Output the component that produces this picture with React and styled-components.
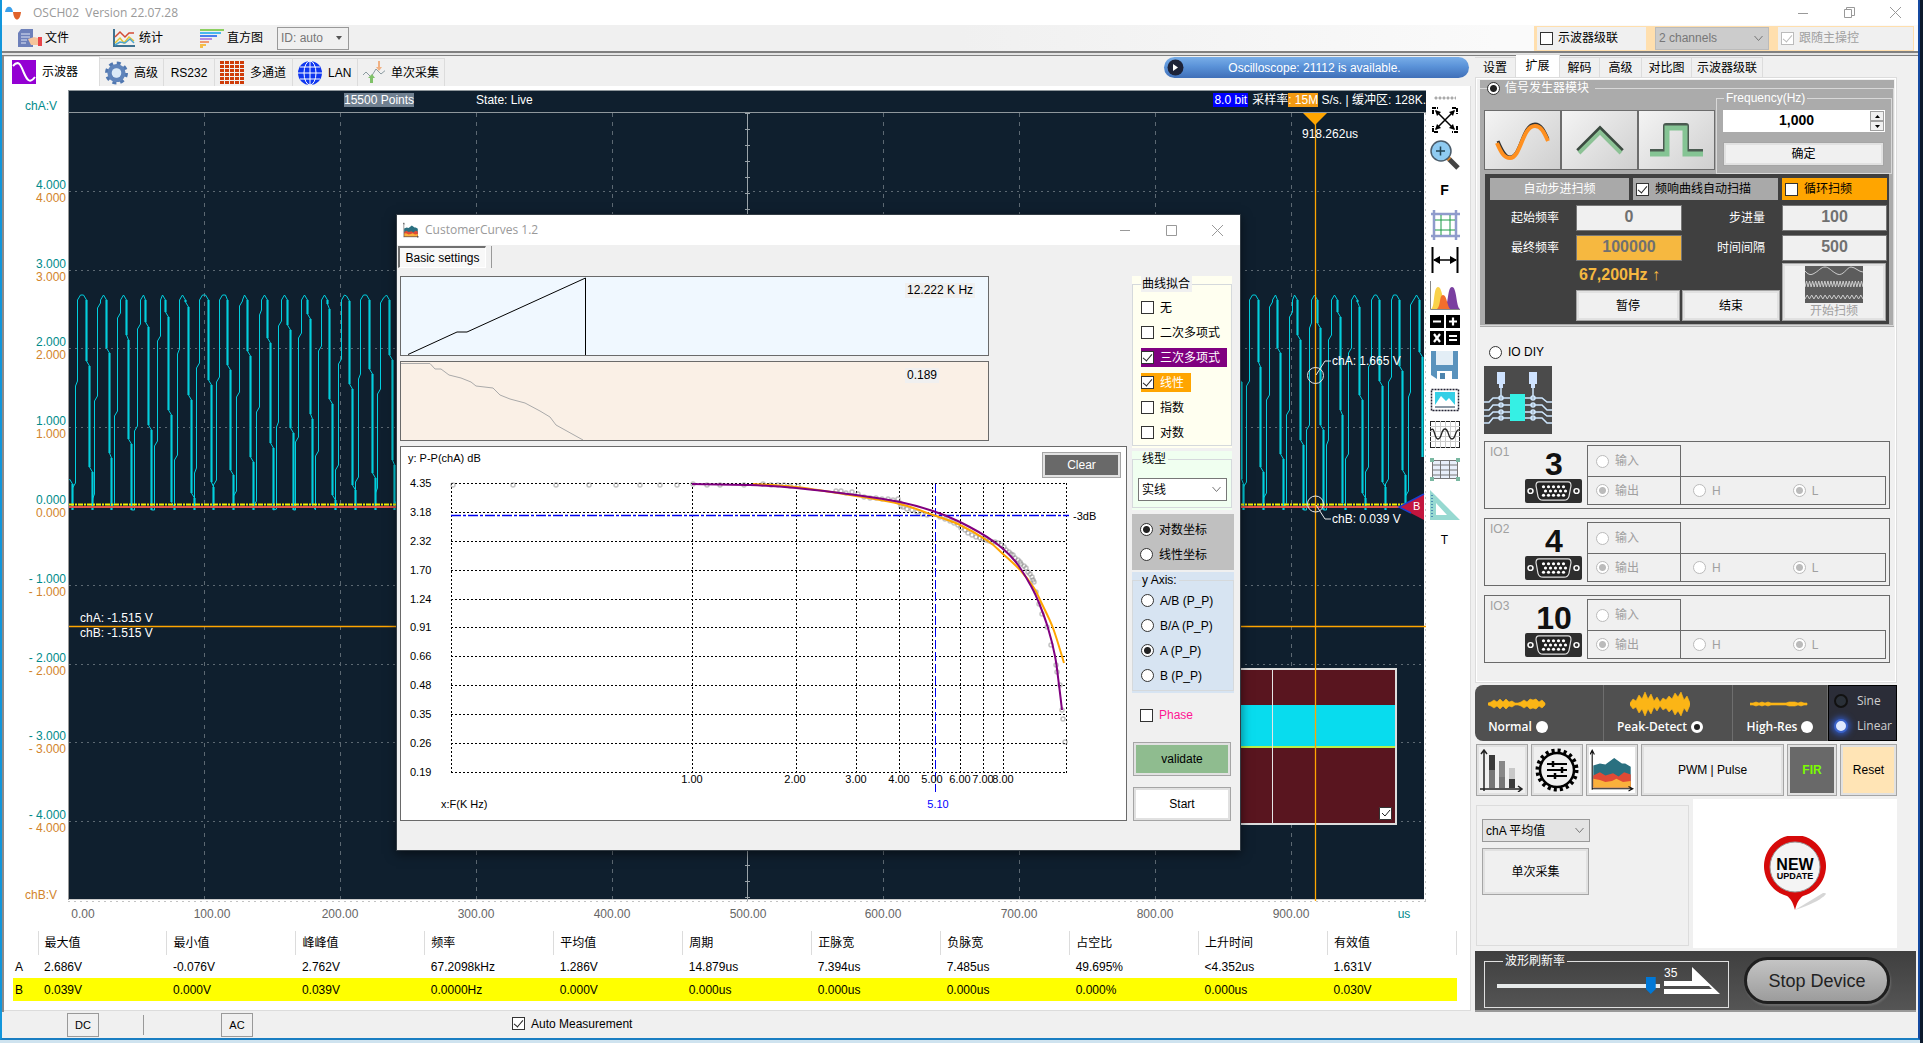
import React from "react";
import styled, { createGlobalStyle, css } from "styled-components";

const GlobalStyle = createGlobalStyle`
  * { box-sizing: border-box; }
  body {
    margin: 0;
    background: #0d1a2c;
    font-family: "Liberation Sans", "Noto Sans CJK SC", sans-serif;
    font-size: 12px;
    line-height: 16px;
    color: #000;
  }
  button, input, select { font: inherit; color: inherit; margin: 0; }
  fieldset { margin: 0; padding: 0; min-width: 0; border: 0; }
  legend { padding: 0; }
  svg { display: block; }
`;

/* ---------- window shell ---------- */

const Desktop = styled.div`
  position: relative;
  padding: 0 3px 3px 0;
  background: linear-gradient(#0d1a2c, #0d1a2c) right / 3px 100% no-repeat, #cfe3ef;
`;

const AppWindow = styled.div`
  display: flex;
  flex-direction: column;
  background: #f0f0f0;
  border-left: 2px solid #1296db;
  border-right: 2px solid #1549a0;
  border-bottom: 2px solid #1a7ec2;
`;

const TitleBar = styled.header`
  display: flex;
  align-items: center;
  height: ${(p) => (p.$tall ? "30px" : "25px")};
  padding-left: ${(p) => (p.$tall ? "6px" : "2px")};
  background: #fff;
`;

const TitleText = styled.div`
  flex: 1;
  padding-left: ${(p) => (p.$wide ? "11px" : "6px")};
  color: #999;
  font-family: "Open Sans", "Noto Sans", sans-serif;
  white-space: pre;
`;

const CaptionButton = styled.button`
  display: grid;
  place-items: center;
  width: 46px;
  height: 100%;
  padding: 0;
  border: 0;
  background: none;
`;

const MenuBar = styled.nav`
  display: flex;
  align-items: center;
  height: 26px;
  padding-left: 14px;
  background: linear-gradient(90deg, #f0f0f0 50%, #fafafa 78%);
`;

const MenuButton = styled.button`
  display: flex;
  align-items: center;
  gap: 3px;
  width: ${(p) => p.$width}px;
  height: 24px;
  padding: 0 2px;
  border: 0;
  background: none;
`;

const Divider = styled.div`
  height: 5px;
  border-top: 2px solid #808080;
  border-bottom: 1px solid #808080;
  background: #e4e4e4;
`;

const SelectBox = styled.div`
  position: relative;
  width: ${(p) => p.$width}px;
  height: 23px;
  svg { position: absolute; right: 6px; top: 8px; pointer-events: none; }
  select {
    appearance: none;
    width: 100%;
    height: 100%;
    padding: 0 3px;
    border: 1px solid ${(p) => p.$border || "#999"};
    border-radius: 0;
    background: ${(p) => p.$bg || "#f0f0f0"};
    color: ${(p) => p.$color || "#000"};
    opacity: 1;
  }
`;

function Select({ label, value, arrow, disabled, ...rest }) {
  return (
    <SelectBox {...rest}>
      <select aria-label={label} disabled={disabled} defaultValue={value}>
        <option>{value}</option>
      </select>
      {arrow === "solid" ? (
        <svg width="7" height="6"><path d="M0 1h6L3 5z" fill="#555" /></svg>
      ) : (
        <svg width="9" height="7"><path d="M.5 1L4.500 5.500 8.500 1" fill="none" stroke="#777" /></svg>
      )}
    </SelectBox>
  );
}

const CascadeBar = styled.div`
  display: flex;
  align-items: center;
  gap: 9px;
  height: 25px;
  margin: 0 4px 0 auto;
  padding: 0 1px 0 3px;
  background: #ffdfae;
`;

const CascadeCell = styled.div`
  display: flex;
  align-items: center;
  width: ${(p) => p.$width}px;
  height: 23px;
  padding-left: 3px;
  background: #f0f0f0;
`;

/* ---------- shared controls ---------- */

const OptionLabel = styled.label`
  display: inline-flex;
  align-items: center;
  gap: ${(p) => p.$gap || 6}px;
  color: ${(p) => p.$color || "inherit"};
  white-space: nowrap;
`;

const Check = styled.input.attrs({ type: "checkbox" })`
  appearance: none;
  flex: none;
  position: relative;
  width: 13px;
  height: 13px;
  border: 1px solid ${(p) => (p.disabled ? "#bbb" : "#333")};
  background: #fff;
  &:checked::after {
    content: "";
    position: absolute;
    left: 3px;
    top: 0;
    width: 4px;
    height: 8px;
    border: solid ${(p) => (p.disabled ? "#bbb" : "#222")};
    border-width: 0 1px 1px 0;
    transform: rotate(40deg);
  }
`;

const Radio = styled.input.attrs({ type: "radio" })`
  appearance: none;
  flex: none;
  width: 13px;
  height: 13px;
  border: 1px solid ${(p) => (p.disabled ? "#bbb" : "#333")};
  border-radius: 50%;
  background: #fff;
  &:checked {
    background: radial-gradient(circle, ${(p) => (p.disabled ? "#bbb" : "#222")} 3px, #fff 4px);
  }
`;

const FlatButton = styled.button`
  display: flex;
  flex-direction: column;
  align-items: center;
  justify-content: center;
  flex: ${(p) => (p.$grow ? "1" : "none")};
  width: ${(p) => (p.$width ? p.$width + "px" : "auto")};
  height: ${(p) => p.$height}px;
  padding: 0;
  border: 1px solid #a5a5a5;
  box-shadow: inset 0 0 0 2px #e1e1e1;
  background: ${(p) => p.$bg || "#f0f0f0"};
  color: ${(p) => p.$color || "#000"};
  font-weight: ${(p) => (p.$bold ? "bold" : "normal")};
  overflow: hidden;
`;

/* ---------- main split ---------- */

const Main = styled.main`
  display: grid;
  grid-template-columns: minmax(0, 1fr) 443px;
`;

const LeftPane = styled.section`
  margin-right: 4px;
  border-left: 2px solid #8a8a8a;
`;

const TabStrip = styled.div`
  display: flex;
  align-items: flex-end;
  height: 30px;
`;

const Tab = styled.button`
  display: flex;
  align-items: center;
  justify-content: ${(p) => (p.$text ? "center" : "flex-start")};
  gap: 6px;
  height: ${(p) => (p.$active ? "30px" : "28px")};
  width: ${(p) => p.$width}px;
  padding: 0 ${(p) => (p.$active ? "8px" : "5px")};
  border: 1px solid #dcdcdc;
  border-width: 1px 1px 0 0;
  background: ${(p) => (p.$active ? "#fff" : "#f0f0f0")};
  white-space: nowrap;
`;

const Notice = styled.div`
  display: flex;
  align-items: center;
  align-self: flex-start;
  width: 305px;
  height: 21px;
  margin: 1px 2px 0 auto;
  padding-left: 3px;
  border-radius: 11px;
  background: linear-gradient(#79aee8, #5a92d8 45%, #3f6fb8);
  color: #fff;
  span { flex: 1; padding-right: 24px; text-align: center; }
`;

const ScopePage = styled.div`
  height: 925px;
  padding-top: 4px;
  background: #fff;
  border-bottom: 1px solid #dcdcdc;
  border-right: 1px solid #dcdcdc;
`;

const ScopeRow = styled.div`
  display: grid;
  grid-template-columns: minmax(0, 1fr) 44px;
`;

const ScopeHead = styled.div`
  display: flex;
  height: 23px;
`;

const AxisName = styled.div`
  width: 64px;
  padding: 8px 0 0 21px;
  color: #008b8b;
`;

const StatusLine = styled.div`
  display: flex;
  flex: 1;
  align-items: flex-start;
  padding: 2px 0 0 275px;
  border: 1px solid #8f979c;
  border-right: 0;
  background: #0f1f2e;
  color: #fff;
  line-height: 14px;
  white-space: pre;
`;

const StatusRight = styled.div`
  margin-left: auto;
`;

const Chip = styled.span`
  padding: 0 ${(p) => p.$pad || 0}px;
  margin-right: ${(p) => p.$after || 0}px;
  background: ${(p) => p.$bg || "none"};
`;

const Plot = styled.svg`
  width: 100%;
  height: 812px;
  font-size: 12px;
`;

const ToolColumn = styled.div`
  display: flex;
  flex-direction: column;
  align-items: center;
  padding-right: 7px;
`;

const Grip = styled.div`
  width: 22px;
  height: 12px;
  background: radial-gradient(circle, #aaa 1px, transparent 2px) 0 6px / 4px 4px repeat-x;
`;

const ToolButton = styled.button`
  display: grid;
  place-items: center;
  width: 34px;
  height: 35px;
  padding: 0;
  border: 0;
  background: none;
  font-size: ${(p) => (p.$bold ? "14px" : "12px")};
  font-weight: ${(p) => (p.$bold ? "bold" : "normal")};
`;

const Measurements = styled.table`
  width: calc(100% - 22px);
  margin: 6px 0 0 9px;
  border-collapse: collapse;
  table-layout: fixed;
  th, td { height: 23px; padding: 0 0 0 6px; text-align: left; font-weight: normal; }
  thead th { height: 24px; border-right: 1px solid #dcdcdc; }
  tbody th, thead td { width: 25px; padding-left: 2px; }
  thead td { border-right: 1px solid #dcdcdc; }
  tbody tr:last-child { background: #ff0; }
`;

const Footer = styled.footer`
  display: flex;
  align-items: center;
  height: 26px;
  padding-left: 65px;
`;

const CouplingButton = styled.button`
  width: 32px;
  height: 24px;
  padding: 0;
  border: 1px solid #999;
  background: #f0f0f0;
  font-size: 11px;
`;

const FooterRule = styled.div`
  width: 1px;
  height: 20px;
  margin: 0 77px 0 44px;
  background: #999;
`;

const AutoMeasure = styled.div`
  margin-left: 259px;
`;

/* ---------- right pane ---------- */

const RightPane = styled.aside`
  display: flex;
  flex-direction: column;
`;

const SideTabs = styled.div`
  display: flex;
  align-items: flex-end;
  height: 21px;
`;

const SideTab = styled.button`
  width: ${(p) => p.$width}px;
  height: ${(p) => (p.$active ? "23px" : "20px")};
  padding: 0;
  border: 1px solid #dcdcdc;
  border-width: 1px 1px 0 0;
  background: ${(p) => (p.$active ? "#fff" : "#f0f0f0")};
  white-space: nowrap;
`;

const SidePage = styled.div`
  height: 606px;
  margin-right: 21px;
  padding: 1px 1px 0 3px;
  border: 2px solid #fff;
  outline: 1px solid #dcdcdc;
  outline-offset: -1px;
  background: #f0f0f0;
`;

const Generator = styled.div`
  height: 247px;
  background: #ababab;
`;

const GeneratorSet = styled.fieldset`
  height: 246px;
  border: 1px solid #d8d8d8;
  border-left: 0;
  legend {
    height: 16px;
    margin-left: 7px;
    padding-right: 6px;
    color: #fff;
  }
`;

const WaveRow = styled.div`
  display: flex;
  padding-left: 4px;
`;

const WaveButton = styled.button`
  display: grid;
  place-items: center;
  width: 77px;
  height: 60px;
  margin-top: 14px;
  padding: 0;
  border: 1px solid #6c6c6c;
  background: linear-gradient(135deg, #f4f4f4, #cfcfcf);
`;

const FrequencySet = styled.fieldset`
  width: 176px;
  height: 83px;
  margin: -5px 0 0 1px;
  padding: 5px 6px 0;
  border: 1px solid #d8d8d8;
  legend { height: 14px; margin-left: 1px; padding: 0 2px; color: #fff; line-height: 14px; }
`;

const SpinBox = styled.div`
  display: flex;
  height: 22px;
  margin-bottom: 10px;
  background: #fff;
  input {
    flex: 1;
    width: 0;
    padding: 0 0 3px;
    border: 0;
    background: none;
    font-size: 14px;
    font-weight: bold;
    text-align: center;
  }
`;

const SpinButtons = styled.div`
  display: grid;
  width: 15px;
  padding: 1px 1px 1px 0;
  button {
    display: grid;
    place-items: center;
    padding: 0;
    border: 1px solid #a0a0a0;
    background: #f0f0f0;
  }
`;

const SweepPanel = styled.div`
  display: flex;
  flex-direction: column;
  gap: 4px;
  height: 150px;
  margin: 0 4px 0 5px;
  padding: 4px 2px 0 5px;
  background: #404040;
  color: #fff;
`;

const SweepHead = styled.div`
  display: grid;
  grid-template-columns: 139px 145px 1fr;
  gap: 4px;
  height: 23px;
`;

const SweepCell = styled.div`
  display: flex;
  align-items: center;
  height: 22px;
  padding-left: 3px;
  background: ${(p) => p.$bg};
  color: #000;
`;

const SweepTitle = styled.button`
  height: 22px;
  padding: 0;
  border: 0;
  background: #a9a9a9;
  color: #fff;
`;

const SweepFields = styled.div`
  display: grid;
  grid-template-columns: 86px 106px 100px 1fr;
  gap: 4px 0;
  align-items: center;
  label { padding-right: 17px; text-align: right; }
`;

const SweepInput = styled.input`
  width: 100%;
  height: 26px;
  padding: 0 0 2px;
  border: 1px solid #777;
  border-radius: 0;
  background: ${(p) => p.$bg || "#f0f0f0"};
  color: #707070;
  font-size: 16px;
  font-weight: bold;
  text-align: center;
`;

const SweepActions = styled.div`
  display: flex;
  justify-content: flex-end;
  gap: 2px;
  margin-top: -2px;
  padding-right: 1px;
`;

const SweepRun = styled.div`
  display: flex;
  flex-wrap: wrap;
  gap: 0 2px;
  width: 204px;
`;

const SweepReading = styled.output`
  width: 100%;
  height: 27px;
  padding: 4px 0 0 3px;
  color: #f6b840;
  font-size: 16px;
  font-weight: bold;
`;

const DiyRow = styled.div`
  padding: 17px 0 6px 9px;
  height: 39px;
`;

const ChipPicture = styled.div`
  width: 68px;
  height: 68px;
  margin: 0 0 7px 4px;
`;

const IoCard = styled.section`
  display: grid;
  grid-template-columns: 102px 1fr;
  height: 68px;
  margin: 0 4px 9px 4px;
  border: 1px solid #6a6a6a;
  color: #a0a0a0;
`;

const IoId = styled.div`
  display: grid;
  grid-template-columns: 35px 1fr;
  grid-template-rows: 34px 25px;
  padding: 2px 4px 0 5px;
  strong {
    color: #111;
    font-size: 32px;
    line-height: 40px;
    text-align: center;
  }
  svg { grid-column: 2; margin-top: 1px; }
`;

const IoGrid = styled.div`
  display: grid;
  grid-template-columns: 94px 1fr;
  grid-template-rows: 31px 29px;
  padding: 3px 3px 0 0;
`;

const IoCell = styled.div`
  display: flex;
  align-items: center;
  gap: ${(p) => p.$gap || 0}px;
  padding-left: ${(p) => p.$left || 8}px;
  border: 1px solid #6a6a6a;
  border-left-width: ${(p) => (p.$joined ? 0 : 1)}px;
  border-bottom-width: ${(p) => (p.$open ? 0 : 1)}px;
`;

const ModeStrip = styled.div`
  display: grid;
  grid-template-columns: 129px 129px 95px 1fr;
  height: 56px;
  margin: 2px 21px 3px 0;
  border-radius: 8px 0 0 8px;
  background: #505050;
  color: #fff;
  font-family: "Open Sans", "Noto Sans", sans-serif;
  overflow: hidden;
`;

const Mode = styled.label`
  display: flex;
  flex-direction: column;
  align-items: center;
  gap: 1px;
  padding-top: 5px;
  padding-right: ${(p) => p.$shift || 0}px;
  border-right: 1px solid #6e6e6e;
  font-weight: 600;
  span { display: flex; align-items: center; gap: 4px; white-space: nowrap; }
`;

const ModeRadio = styled.input.attrs({ type: "radio" })`
  appearance: none;
  width: 12px;
  height: 12px;
  border-radius: 50%;
  background: #fff;
  &:checked { border: 3px solid #fff; background: #222; }
`;

const Interp = styled.div`
  display: grid;
  grid-template-rows: 25px 25px;
  padding: 2px 0 0 5px;
  border: 1px solid #000;
  background: #2b2d38;
  color: #cfcfcf;
  overflow: hidden;
`;

const LedRadio = styled.input.attrs({ type: "radio" })`
  appearance: none;
  flex: none;
  width: 14px;
  height: 14px;
  border: 2px solid #111;
  border-radius: 50%;
  background: #2a3038;
  &:checked { border-color: #3a62c8; background: #dfe9ff; box-shadow: 0 0 6px 2px #3158c0; }
`;

const ToolRow = styled.div`
  display: flex;
  gap: 3px;
  margin: 0 21px 3px 1px;
`;

const LowerRow = styled.div`
  display: grid;
  grid-template-columns: 213px 1fr;
  gap: 4px;
  height: 149px;
  margin: 0 21px 3px 1px;
`;

const CaptureBox = styled.div`
  display: flex;
  flex-direction: column;
  align-items: flex-start;
  gap: 6px;
  margin: 6px 0 2px;
  padding: 13px 5px 0;
  border: 1px solid #dcdcdc;
`;

const UpdateBox = styled.div`
  display: grid;
  place-items: center;
  background: #fff;
`;

const DeviceBar = styled.div`
  display: flex;
  align-items: center;
  height: 61px;
  margin-right: 2px;
  padding-left: 9px;
  border-bottom: 2px solid #999;
  background: linear-gradient(#3f3f3f, #555);
`;

const RefreshSet = styled.fieldset`
  display: flex;
  width: 245px;
  height: 55px;
  padding-left: 12px;
  border: 1px solid #e0e0e0;
  color: #fff;
  legend { margin-left: 6px; padding: 0 2px; }
`;

const RefreshSlider = styled.input.attrs({ type: "range" })`
  appearance: none;
  width: 163px;
  height: 17px;
  margin: 8px 4px 0 0;
  background: linear-gradient(#e7eaea, #e7eaea) center / 100% 4px no-repeat;
  &::-webkit-slider-thumb {
    appearance: none;
    width: 10px;
    height: 17px;
    background: #0078d7;
    clip-path: polygon(0 0, 100% 0, 100% 70%, 50% 100%, 0 70%);
  }
`;

const RefreshValue = styled.output`
  display: block;
  height: 38px;
  line-height: 8px;
  svg { margin-top: -10px; }
`;

const StopButton = styled.button`
  width: 146px;
  height: 47px;
  margin-left: 15px;
  border: 3px solid #1f1f1f;
  border-radius: 24px;
  background: linear-gradient(#c4c4c4, #9c9c9c);
  box-shadow: 1px 2px 2px #6a6a6a;
  font-size: 18px;
  color: #222;
  white-space: nowrap;
`;

/* ---------- curve window ---------- */

const CurveWindow = styled.section`
  position: absolute;
  left: 396px;
  top: 214px;
  width: 845px;
  height: 637px;
  border: 1px solid #333c44;
  background: #f0f0f0;
  box-shadow: 0 3px 10px rgba(0, 0, 0, 0.5);
`;

const CurveTabs = styled.div`
  display: flex;
  gap: 5px;
  height: 22px;
  margin: 1px 0 8px;
  padding-left: 1px;
  i { width: 1px; background: #999; }
`;

const CurveTab = styled.button`
  width: 88px;
  padding: 0;
  border: 1px solid #fff;
  border-top: 2px solid #707070;
  border-left: 2px solid #707070;
  background: #f8f8f8;
  white-space: nowrap;
`;

const CurveBody = styled.div`
  display: grid;
  grid-template-columns: 727px 102px;
  gap: 5px;
  padding-left: 3px;
`;

const CurveCharts = styled.div`
  display: flex;
  flex-direction: column;
  gap: 5px;
`;

const MiniChart = styled.div`
  position: relative;
  width: 589px;
  height: 80px;
  border: 1px solid #6a6a6a;
  background: ${(p) => p.$bg};
`;

const MiniValue = styled.output`
  position: absolute;
  left: 504px;
  top: 6px;
  padding: 0 2px;
  background: #f0f0f0;
  line-height: 15px;
`;

const BigChart = styled.div`
  position: relative;
  height: 375px;
  border: 1px solid #6a6a6a;
  background: #fff;
  svg { font-size: 11px; }
  button { position: absolute; right: 5px; top: 5px; }
`;

const CurveOptions = styled.div`
  display: flex;
  flex-direction: column;
`;

const OptionPanel = styled.div`
  height: ${(p) => p.$height}px;
  margin-bottom: ${(p) => p.$after}px;
  margin-right: ${(p) => p.$inset || 0}px;
  background: ${(p) => p.$bg};
  ${(p) =>
    p.$plain &&
    css`
      padding-top: 3px;
      fieldset { border: 0; }
    `}
`;

const OptionSet = styled.fieldset`
  height: calc(100% - 2px);
  padding: ${(p) => p.$top || 0}px 0 0 8px;
  border: 1px solid #d5d9dc;
  legend { padding: 0 2px 0 1px; background: ${(p) => p.$legend || "none"}; }
`;

const OptionRow = styled.div`
  display: flex;
  align-items: center;
  height: 25px;
  label { height: 19px; padding-right: ${(p) => (p.$bg ? 7 : 0)}px; background: ${(p) => p.$bg || "none"}; }
`;

const LineSelect = styled.div`
  margin: 11px 0 0 -3px;
`;

const PhaseRow = styled.div`
  height: 40px;
  padding: 5px 0 0 8px;
`;

const ActionStack = styled.div`
  display: flex;
  flex-direction: column;
  gap: 11px;
  margin: 0 3px 0 1px;
`;

/* ---------- icons ---------- */

const LogoIcon = () => (
  <svg width="18" height="16" viewBox="0 0 18 16">
    <path d="M1 7c1-7 7-7 8 0z" fill="#3ba0ea" /><path d="M9 7h8c-1 10-7 10-8 0z" fill="#e0622a" />
  </svg>
);
const AreaIcon = ({ size = 16 }) => (
  <svg width={size} height={size} viewBox="0 0 40 40">
    <path d="M3 36V16l6-2 5 1 8-6 7 5 3 0 5 3v19z" fill="#2a7080" />
    <path d="M3 36V25l6-3 5 3 7-2 5 3 5-4 6 2v12z" fill="#e04a35" />
    <path d="M3 36V28l6 1 5 2 6-1 4-2 6 3 7-1v6z" fill="#f9b13c" />
    <path d="M2 37h36M2 38V3M0 6l2-4 2 4M35 35l4 2-4 2" fill="none" stroke="#111" />
  </svg>
);
const FileIcon = () => (
  <svg width="24" height="19" viewBox="0 0 24 19">
    <path d="M3 0h12v18H0V4z" fill="#6d80ba" /><path d="M3 5h9M3 8h9M3 11h6M3 14h5" stroke="#dfe5f5" />
    <path d="M10 10l6-2 4 1v7h-7z" fill="#f5c49b" /><path d="M20 8h4v9h-4z" fill="#e8454a" />
  </svg>
);
const StatsIcon = () => (
  <svg width="24" height="19" viewBox="0 0 24 19" fill="none" strokeWidth="1.500">
    <path d="M2 0v17h21" stroke="#3f7291" strokeWidth="2" /><path d="M3 8l5-5 5 5 4-4 5 0" stroke="#d34b34" />
    <path d="M3 14l5-5 4 5 5-6 5 4" stroke="#e5c32e" /><path d="M3 16l5-3 5 1 5-4 4 4" stroke="#4ca7cf" />
  </svg>
);
const FunnelIcon = () => (
  <svg width="24" height="19" viewBox="0 0 24 19" strokeWidth="2">
    <path d="M0 1h24" stroke="#8ccf5f" /><path d="M0 4h21" stroke="#4ab8ee" /><path d="M0 7h17" stroke="#4a7fee" />
    <path d="M0 10h12" stroke="#b58be0" /><path d="M0 13h9" stroke="#f09a72" /><path d="M0 16h6M0 18h3" stroke="#f5bd48" />
  </svg>
);
const SineTabIcon = () => (
  <svg width="24" height="24"><path d="M0 0h24v24H0z" fill="#9400d3" /><path d="M1 6c6-7 8 0 11 7s6 11 11 4" fill="none" stroke="#fff" strokeWidth="2" /></svg>
);
const GearIcon = () => (
  <svg width="24" height="24" viewBox="0 0 24 24">
    <circle cx="12" cy="12" r="10" fill="none" stroke="#5077b0" strokeWidth="4" strokeDasharray="4 3.850" />
    <circle cx="12" cy="12" r="7" fill="none" stroke="#5f84bb" strokeWidth="5" /><circle cx="12" cy="12" r="5" fill="#dbeaf8" />
  </svg>
);
const DotsIcon = () => (
  <svg width="24" height="24">
    {[0, 4, 8, 12, 16, 20].map((y) => [0, 5, 10, 15, 20].map((x) => <rect key={x + "-" + y} x={x} y={y} width="4" height="3" fill="#cf3c0a" />))}
  </svg>
);
const GlobeIcon = () => (
  <svg width="24" height="24"><circle cx="12" cy="12" r="12" fill="#0f36f0" />
    <path d="M12 0v24M0 12h24M2 6h20M2 18h20" stroke="#fff" fill="none" /><ellipse cx="12" cy="12" rx="6" ry="12" fill="none" stroke="#fff" /></svg>
);
const CaptureIcon = () => (
  <svg width="24" height="24" fill="none"><path d="M0 14l3-3 5 5 5-8 5 5 6-5" stroke="#8b9aa0" />
    <path d="M15 0v6h-2l3 4 3-4h-2V0z" fill="#f0b183" /><path d="M7 22v-5H5l4-4 3 4h-2v5z" fill="#7fc168" /></svg>
);

const tools = [
  ["Fit", <svg width="28" height="28" viewBox="0 0 28 28" fill="none" stroke="#000" strokeWidth="1.500">
    <path d="M2 8V2h5M21 2h5v6M26 20v6h-5M7 26H2v-6" strokeWidth="2" strokeDasharray="4 1" /><path d="M5 5l18 18M23 5L5 23" />
    <path d="M4 4l6 2-4 4zM24 4l-6 2 4 4zM4 24l6-2-4-4zM24 24l-6-2 4-4z" fill="#000" stroke="none" /></svg>],
  ["Zoom", <svg width="30" height="30" viewBox="0 0 30 30"><path d="M19 19l9 9" stroke="#444" strokeWidth="5" /><path d="M17 20l3-3" stroke="#f08a24" strokeWidth="3" />
    <circle cx="11" cy="11" r="10" fill="#8fcbf2" stroke="#4b5c6b" strokeWidth="1.500" /><path d="M6 11h9M10.500 6.500v9" stroke="#245" strokeWidth="1.500" /></svg>],
  ["F", "F"],
  ["Grid", <svg width="30" height="30" fill="none"><path d="M1 4h29M1 26h29M4 0v30M26 0v30" stroke="#8f9bcc" strokeWidth="2.500" /><path d="M11 5v20M20 5v20M5 10h20M5 20h20" stroke="#1d9c46" /></svg>],
  ["Width", <svg width="28" height="26"><path d="M1.500 0v26M26.500 0v26" stroke="#000" strokeWidth="2" /><path d="M3 13h22" stroke="#000" strokeWidth="1.500" /><path d="M2 13l7-4v8zM26 13l-7-4v8z" /></svg>],
  ["Distribution", <svg width="30" height="30"><path d="M1 29C5 28 3 7 8 7s5 20 8 22z" fill="#fad24a" /><path d="M14 29c5-3 3-22 8-22s4 20 8 22z" fill="#7a3fa0" />
    <path d="M7 29c4-3 2-14 6-14s4 11 7 14z" fill="#f26e2c" /><path d="M.5 1v28.500H30" fill="none" stroke="#888" /></svg>],
  ["Math", <svg width="30" height="30"><path d="M0 0h14v13H0zM16 0h14v13H16zM0 16h14v14H0zM16 16h14v14H16z" />
    <path d="M3 6.500h8M19 6.500h8M23 2.500v8M4 19l6 8M10 19l-6 8M19 21h8M19 25h8" stroke="#fff" strokeWidth="2.200" /></svg>],
  ["Save", <svg width="27" height="28"><path d="M0 0h27v28H6l-6-4z" fill="#5a93bd" /><path d="M5 0h17v14H5z" fill="#e3eef6" /><path d="M6 20h15v8H6z" fill="#fff" /><path d="M9 22h5v6H9z" fill="#4d84ad" /></svg>],
  ["Picture", <svg width="30" height="24"><rect x="1.500" y="1.500" width="27" height="21" fill="none" stroke="#223" strokeWidth="1.500" strokeDasharray="2 1" />
    <path d="M5 4h20v13H5z" fill="#35cfe6" /><path d="M5 17l6-9 5 5 3-3 6 7z" fill="#fff" /><path d="M5 18h20v2H5z" fill="#8a98a5" /></svg>],
  ["Wave", <svg width="30" height="27"><rect x=".5" y=".5" width="29" height="26" fill="#fff" stroke="#222" />
    <path d="M5.500 0v27M10.500 0v27M15.500 0v27M20.500 0v27M25.500 0v27M0 5.500h30M0 10.500h30M0 15.500h30M0 20.500h30" stroke="#ccc" />
    <path d="M1 9c4-4 3 9 7 9s3-10 7-10 3 10 7 10 3-10 7-9" fill="none" stroke="#222" strokeWidth="1.300" /></svg>],
  ["Table", <svg width="30" height="23"><rect x="2.500" y="2.500" width="25" height="18" fill="#e8effa" stroke="#777" />
    <path d="M10.500 2v19M19.500 2v19M2 7h26M2 12h26M2 17h26" stroke="#777" fill="none" /><path d="M0 0h4v4H0zM26 0h4v4h-4zM0 19h4v4H0zM26 19h4v4h-4z" fill="#7ab8a2" /></svg>],
  ["Ruler", <svg width="30" height="30"><path d="M0 0l30 30H0zM6 13v12h11z" fill="#97d9d1" fillRule="evenodd" /><path d="M2 5v22" stroke="#4c8fb5" strokeWidth="2" strokeDasharray="1 2" /></svg>],
  ["Text", "T"],
];

const Connector = () => (
  <svg width="57" height="24" viewBox="0 0 57 25" preserveAspectRatio="none">
    <rect width="57" height="25" rx="2" fill="#2e2e2e" /><path d="M14 3h29q3 0 3 4l-2 11q-1 4-5 4H18q-4 0-5-4L11 7q0-4 3-4z" fill="#222" stroke="#ddd" strokeWidth="1.200" />
    <circle cx="5.500" cy="12.500" r="2.500" fill="none" stroke="#fff" strokeWidth="1.500" /><circle cx="51.500" cy="12.500" r="2.500" fill="none" stroke="#fff" strokeWidth="1.500" />
    {[0, 1, 2, 3, 4].map((i) => <g key={i} fill="#fff"><circle cx={18.5 + i * 5} cy="8" r="1.600" /><circle cx={20.5 + i * 5} cy="12.500" r="1.600" /><circle cx={18.5 + i * 5} cy="17" r="1.600" /></g>)}
  </svg>
);

const ChipDrawing = () => (
  <svg width="68" height="68">
    <path d="M0 0h68v68H0z" fill="#4b4b4b" />
    <g fill="none" stroke="#cfe8ff" strokeWidth="1.500">
      {[32, 39, 46, 52].map((y, i) => <g key={y}><path d={`M27 ${y}H9l-4 ${4 + (i % 2)}H0M41 ${y}h17l5 ${4 + (i % 2)}h5`} /><circle cx="17" cy={y} r="2" /><circle cx="49" cy={y} r="2" /></g>)}
      <path d="M17 22v8M49 22v8" />
    </g>
    <path d="M13 6h8v12h-2v4h-4v-4h-2zM45 6h8v12h-2v4h-4v-4h-2z" fill="#cfe3ff" /><path d="M26 28h15v27H26z" fill="#35f0e4" />
  </svg>
);

const burst = (heights) => "M0 18" + heights.map((h, i) => `L${i * 3} ${18 - h}`).join("") + heights.map((h, i) => { const j = heights.length - 1 - i; return `L${j * 3} ${18 + heights[j]}`; }).join("") + "Z";
const modeWaves = [
  [1, 2, 4, 2, 5, 2, 5, 2, 3, 1, 1, 2, 4, 2, 5, 4, 5, 2, 4, 1],
  [1, 5, 3, 9, 5, 12, 5, 10, 3, 7, 2, 6, 4, 8, 5, 11, 7, 12, 4, 8, 1],
  [1, 1, 2, 1, 2, 1, 2, 1, 1, 1, 1, 1, 1, 2, 2, 2, 1, 2, 1, 1],
];
const ModeWave = ({ index }) => (
  <svg width="60" height="28" viewBox="0 4 60 28"><path d={burst(modeWaves[index])} fill="#fbb516" stroke="#fbb516" strokeWidth=".6" /></svg>
);

/* ---------- oscilloscope drawing ---------- */

const ZERO = 507;
const DIV_Y = 78.8;
const DIV_X = 135.8;

function sampledWave() {
  const step = 2.83;
  const yAt = (x) => Math.round(Math.max(295, Math.min(510, 402 - 124 * Math.cos(((x - 82) / 20.2) * Math.PI * 2))));
  let line = "";
  let fall = "";
  for (let x = 69; x < 1421; x += step) {
    const px = Math.round(x) + 0.5;
    const nx = Math.round(x + step) + 0.5;
    const y = yAt(x);
    const next = yAt(x + step);
    const dy = next - y;
    const bend = Math.sign(dy) * Math.min(5, Math.abs(dy));
    if (!line) line = `M${px} ${y}`;
    if (dy > 0) {
      line += `L${nx} ${y + bend}V${next}`;
      fall += `M${nx} ${y + bend}V${next}`;
    } else {
      line += `V${next - bend}L${nx} ${next}`;
    }
  }
  return [line, fall];
}
const [WAVE_LINE, WAVE_FALL] = sampledWave();

function ScopePlot() {
  const rows = [4, 3, 2, 1, 0, -1, -2, -3, -4];
  const fmt = (v) => (v < 0 ? "- " : "") + Math.abs(v).toFixed(3);
  return (
    <Plot viewBox="4 113 1422 812" preserveAspectRatio="xMinYMin meet">
      <path d="M68 113h1356v786H68z" fill="#0f1f2e" />
      <path d="M68.500 113v787" stroke="#999" />
      <path d="M69 899.500h1355" stroke="#ccc" />
      <g stroke="#5c6872" strokeDasharray="2 4">
        {rows.map((v) => <path key={v} d={`M69 ${Math.round(ZERO - v * DIV_Y) - 0.5}H1424`} />)}
        {[1, 2, 3, 4, 6, 7, 8, 9].map((i) => <path key={i} d={`M${Math.round(68.5 + i * DIV_X) + 0.5} 113V899`} strokeDasharray="4 5" />)}
      </g>
      <path d="M68 901.500h1358M1425.500 113v788" stroke="#c4c4c4" strokeDasharray="2 4" />
      <path d="M747.500 113v788" stroke="#9aa3a9" />
      <path d="M747.500 113v788" stroke="#9aa3a9" strokeWidth="5" strokeDasharray="1 15" />
      {rows.map((v) => (
        <g key={v} textAnchor="end">
          <text x="66" y={ZERO - v * DIV_Y - 3} fill="#008b8b">{fmt(v)}</text>
          <text x="66" y={ZERO - v * DIV_Y + 10} fill="#d2842b">{fmt(v)}</text>
        </g>
      ))}
      <text x="25" y="899" fill="#d2842b">chB:V</text>
      <g fill="#666" textAnchor="middle">
        {[83, 212, 340, 476, 612, 748, 883, 1019, 1155, 1291].map((x, i) => <text key={x} x={x} y="918">{(i * 100).toFixed(2)}</text>)}
        <text x="1404" y="918" fill="#008b8b">us</text>
      </g>
      <path d={WAVE_FALL} fill="none" stroke="#0b8490" strokeWidth="3" />
      <path d={WAVE_LINE} fill="none" stroke="#00cfdf" />
      <path d="M69 504.500H1410" stroke="#f5ee00" strokeWidth="2" strokeDasharray="5 1 2 1" />
      <path d="M69 507H1424" stroke="#e0524a" strokeWidth="2" />
      <path d="M1000 669h396v155h-396z" fill="#59151f" stroke="#ddd" strokeWidth="2" />
      <path d="M1000 705h395v41h-395z" fill="#08dcee" />
      <path d="M1000 747h395" stroke="#b8ef4a" strokeWidth="2" />
      <path d="M1272.500 670v153" stroke="#e5e5e5" />
      <path d="M1379.500 807.500h12v12h-12z" fill="#fff" stroke="#333" />
      <path d="M1382 813l3 3 5-6" fill="none" stroke="#222" />
      <path d="M69 626.500H1426M1315.500 113v788" stroke="#ffa500" strokeWidth="1.300" />
      <path d="M1303 113h24l-12 12z" fill="#ffa500" />
      <g fill="none" stroke="#e8e8e8">
        <circle cx="1315.500" cy="375.500" r="8" /><circle cx="1315.500" cy="504" r="8" />
        <path d="M1316 375l9-14h6M1316 505l9 14h6" />
      </g>
      <path d="M1399 507l25-13v26z" fill="#c2153e" /><path d="M1424 494l-25 13 12 6" fill="none" stroke="#1c3fd0" strokeWidth="1.500" />
      <g fill="#fff">
        <text x="1302" y="138">918.262us</text>
        <text x="1332" y="365">chA: 1.665 V</text>
        <text x="1332" y="523">chB: 0.039 V</text>
        <text x="80" y="622">chA: -1.515 V</text>
        <text x="80" y="637">chB: -1.515 V</text>
        <text x="1413" y="510" fontSize="11">B</text>
      </g>
    </Plot>
  );
}

/* ---------- curve drawing ---------- */

const PURPLE = [[692, 484], [750, 485], [796, 488], [856, 495], [900, 502], [933, 511], [960, 522], [993, 541], [1015, 561], [1031, 586], [1039, 603], [1048, 628], [1055, 656], [1059, 685], [1062, 710]];
const ORANGE = [[753, 484], [796, 487], [856, 496], [900, 504], [933, 515], [960, 525], [988, 541], [1003, 554], [1021, 571], [1034, 588], [1041, 602], [1053, 628], [1064, 663]];
const CLOUD = [[453, 485], [513, 485], [556, 485], [589, 485], [616, 485], [640, 485], [660, 485], [677, 485], [693, 484], [707, 485], [720, 485], [744, 485], [763, 484], [771, 485], [778, 485], [784, 485], [790, 486], [798, 486], [836, 491], [841, 491], [846, 493], [852, 492], [858, 494], [864, 497], [870, 498], [876, 498], [882, 499], [888, 499], [893, 500], [898, 499], [900, 503], [901, 506], [903, 507], [907, 509], [912, 510], [917, 512], [922, 514], [927, 515], [940, 517], [945, 519], [950, 521], [954, 523], [958, 525], [961, 528], [965, 530], [968, 533], [972, 535], [976, 537], [980, 538], [983, 539], [986, 540], [989, 541], [992, 542], [995, 542], [998, 543], [1001, 545], [1004, 547], [1006, 550], [1009, 552], [1011, 554], [1013, 555], [1015, 558], [1018, 560], [1020, 562], [1021, 564], [1024, 566], [1026, 568], [1028, 572], [1030, 574], [1032, 577], [1033, 580], [1034, 582], [1036, 592], [1039, 604], [1042, 614], [1047, 627], [1051, 645], [1056, 665], [1057, 672], [1060, 685], [1062, 710], [1063, 719], [1065, 742]];
const GRID_X = [451, 692, 796, 856, 899, 932, 960, 983, 1003, 1066];
const GRID_Y = [483, 512, 541, 570, 599, 627, 656, 685, 714, 743, 772];
const Y_TICKS = ["4.35", "3.18", "2.32", "1.70", "1.24", "0.91", "0.66", "0.48", "0.35", "0.26", "0.19"];
const X_TICKS = [[692, "1.00"], [795, "2.00"], [856, "3.00"], [899, "4.00"], [932, "5.00"], [960, "6.00"], [983, "7.00"], [1003, "8.00"]];

function smooth(points) {
  let d = `M${points[0]}`;
  for (let i = 0; i < points.length - 1; i++) {
    const p0 = points[Math.max(0, i - 1)], p1 = points[i], p2 = points[i + 1], p3 = points[Math.min(points.length - 1, i + 2)];
    d += `C${p1[0] + (p2[0] - p0[0]) / 6} ${p1[1] + (p2[1] - p0[1]) / 6} ${p2[0] - (p3[0] - p1[0]) / 6} ${p2[1] - (p3[1] - p1[1]) / 6} ${p2[0]} ${p2[1]}`;
  }
  return d;
}

const CurvePlot = () => (
  <svg width="100%" height="373" viewBox="401 447 725 373" preserveAspectRatio="xMinYMin meet">
    <text x="408" y="462">y: P-P(chA) dB</text>
    <g stroke="#000" strokeDasharray="2 2">
      {GRID_Y.map((y) => <path key={y} d={`M451 ${y + 0.5}H1066`} />)}
      {GRID_X.map((x) => <path key={x} d={`M${x + 0.5} 483V773`} />)}
    </g>
    <g fill="none" stroke="#777" strokeOpacity=".45" strokeWidth="1.500">{CLOUD.map(([x, y]) => <circle key={x + "," + y} cx={x} cy={y} r="2" />)}</g>
    <path d="M451 515.500h618" stroke="#0000f0" strokeWidth="1.500" strokeDasharray="10 2 3 2" />
    <path d="M935.500 484v308" stroke="#0000f0" strokeDasharray="9 3" />
    <path d={smooth(ORANGE)} fill="none" stroke="#ffa500" strokeWidth="2" />
    <path d={smooth(PURPLE)} fill="none" stroke="#800080" strokeWidth="2" />
    {Y_TICKS.map((t, i) => <text key={t} x="410" y={GRID_Y[i] + 4}>{t}</text>)}
    <g textAnchor="middle">
      {X_TICKS.map(([x, t]) => <text key={t} x={x} y="783">{t}</text>)}
      <text x="938" y="808" fill="#00f">5.10</text>
    </g>
    <text x="1073" y="520">-3dB</text>
    <text x="441" y="808">x:F(K Hz)</text>
  </svg>
);

const WindowButtons = ({ restore }) => (
  <>
    <CaptionButton aria-label="Minimize"><svg width="10" height="10"><path d="M0 5.500h10" stroke="#999" /></svg></CaptionButton>
    <CaptionButton aria-label="Maximize">
      <svg width="11" height="11" fill="none" stroke="#999">
        {restore ? <path d="M.5 2.500h7v8h-7zM2.500 2.500v-2h8v8h-3" /> : <path d="M.5.5h10v10H.5z" />}
      </svg>
    </CaptionButton>
    <CaptionButton aria-label="Close"><svg width="11" height="11"><path d="M0 0l11 11M11 0L0 11" stroke="#999" /></svg></CaptionButton>
  </>
);

const FITS = [["无"], ["二次多项式"], ["三次多项式", "#800080"], ["线性", "#ffa500"], ["指数"], ["对数"]];

function CustomerCurves() {
  return (
    <CurveWindow>
      <TitleBar $tall>
        <AreaIcon />
        <TitleText>CustomerCurves 1.2</TitleText>
        <WindowButtons />
      </TitleBar>
      <CurveTabs><CurveTab>Basic settings</CurveTab><i /></CurveTabs>
      <CurveBody>
        <CurveCharts>
          <MiniChart $bg="#f0f8ff">
            <svg width="587" height="78"><path d="M7 77.500L56 55h10L184.500 1v77" fill="none" stroke="#000" /></svg>
            <MiniValue>12.222 K Hz</MiniValue>
          </MiniChart>
          <MiniChart $bg="#faf0e6">
            <svg width="587" height="78"><path d="M0 1.500H29L34 7H40L48 13 60 16 70 20 75 24 92 26 99 33 109 37 124 41 139 49 149 55 155 63 164 68 182 78" fill="none" stroke="#aaa" /></svg>
            <MiniValue>0.189</MiniValue>
          </MiniChart>
          <BigChart>
            <CurvePlot />
            <FlatButton $width={79} $height={26} $bg="#696969" $color="#fff">Clear</FlatButton>
          </BigChart>
        </CurveCharts>
        <CurveOptions>
          <OptionPanel $height={172} $after={3} $inset={2} $bg="#fffff0">
            <OptionSet $legend="#f0f0f0" $top={3}>
              <legend>曲线拟合</legend>
              {FITS.map(([name, color]) => (
                <OptionRow key={name} $bg={color}>
                  <OptionLabel $color={color && "#fff"}><Check defaultChecked={!!color} />{name}</OptionLabel>
                </OptionRow>
              ))}
            </OptionSet>
          </OptionPanel>
          <OptionPanel $height={59} $after={4} $inset={2} $bg="#f0fff0">
            <OptionSet>
              <legend>线型</legend>
              <LineSelect><Select label="线型" value="实线" $width={89} $bg="#fff" $border="#777" /></LineSelect>
            </OptionSet>
          </OptionPanel>
          <OptionPanel $height={56} $after={2} $bg="#c0c0c0" $plain>
            <OptionSet>
              <OptionRow><OptionLabel><Radio name="coord" defaultChecked />对数坐标</OptionLabel></OptionRow>
              <OptionRow><OptionLabel><Radio name="coord" />线性坐标</OptionLabel></OptionRow>
            </OptionSet>
          </OptionPanel>
          <OptionPanel $height={121} $after={9} $bg="#d7e4f2">
            <OptionSet>
              <legend>y Axis:</legend>
              {["A/B (P_P)", "B/A (P_P)", "A (P_P)", "B (P_P)"].map((name) => (
                <OptionRow key={name}><OptionLabel><Radio name="yaxis" defaultChecked={name === "A (P_P)"} />{name}</OptionLabel></OptionRow>
              ))}
            </OptionSet>
          </OptionPanel>
          <PhaseRow><OptionLabel $color="#ff1493"><Check />Phase</OptionLabel></PhaseRow>
          <ActionStack>
            <FlatButton $height={34} $bg="#8fbc8f">validate</FlatButton>
            <FlatButton $height={34} $bg="#fff">Start</FlatButton>
          </ActionStack>
        </CurveOptions>
      </CurveBody>
    </CurveWindow>
  );
}

/* ---------- application ---------- */

const COLUMNS = ["最大值", "最小值", "峰峰值", "频率", "平均值", "周期", "正脉宽", "负脉宽", "占空比", "上升时间", "有效值"];
const ROWS = [
  ["A", "2.686V", "-0.076V", "2.762V", "67.2098kHz", "1.286V", "14.879us", "7.394us", "7.485us", "49.695%", "<4.352us", "1.631V"],
  ["B", "0.039V", "0.000V", "0.039V", "0.0000Hz", "0.000V", "0.000us", "0.000us", "0.000us", "0.000%", "0.000us", "0.030V"],
];

const SineWave = () => (
  <svg width="56" height="44" fill="none" strokeWidth="3"><path d="M3 23c5 12 8 16 12 16 11 0 12-33 25-33 6 0 9 6 13 15" stroke="#333" /><path d="M2 25c5 12 8 15 13 15 11 0 12-32 25-32 6 0 9 6 13 15" stroke="#ff9020" strokeWidth="4" /></svg>
);
const TriangleWave = () => (
  <svg width="52" height="44" fill="none"><path d="M4 33l22-22 22 22" stroke="#3b4a40" strokeWidth="5" /><path d="M5 35l21-21 21 21" stroke="#8cc295" strokeWidth="4" /></svg>
);
const SquareWave = () => (
  <svg width="56" height="44" fill="none"><path d="M1 34h16V8h20v26h17" stroke="#4a5a50" strokeWidth="6" strokeLinejoin="round" /><path d="M1 36h17V10h18v26h18" stroke="#85c494" strokeWidth="5" /></svg>
);

const zig = (y, amp, n) => `M0 ${y}` + Array.from({ length: n }, (_, i) => `l${58 / n} ${i % 2 ? amp : -amp}`).join("");

function SidePanel() {
  return (
    <RightPane>
      <SideTabs>
        <SideTab $width={41}>设置</SideTab>
        <SideTab $width={44} $active>扩展</SideTab>
        <SideTab $width={40}>解码</SideTab>
        <SideTab $width={42}>高级</SideTab>
        <SideTab $width={50}>对比图</SideTab>
        <SideTab $width={71}>示波器级联</SideTab>
      </SideTabs>
      <SidePage>
        <Generator>
          <GeneratorSet>
            <legend><OptionLabel $gap={5}><Radio name="module" defaultChecked />信号发生器模块</OptionLabel></legend>
            <WaveRow>
              <WaveButton aria-label="Sine"><SineWave /></WaveButton>
              <WaveButton aria-label="Triangle"><TriangleWave /></WaveButton>
              <WaveButton aria-label="Square"><SquareWave /></WaveButton>
              <FrequencySet>
                <legend>Frequency(Hz)</legend>
                <SpinBox>
                  <input aria-label="Frequency(Hz)" defaultValue="1,000" />
                  <SpinButtons>
                    <button aria-label="Increase"><svg width="5" height="3"><path d="M0 3h5L2.500 0z" /></svg></button>
                    <button aria-label="Decrease"><svg width="5" height="3"><path d="M0 0h5L2.500 3z" /></svg></button>
                  </SpinButtons>
                </SpinBox>
                <FlatButton $width={161} $height={24}>确定</FlatButton>
              </FrequencySet>
            </WaveRow>
            <SweepPanel>
              <SweepHead>
                <SweepTitle>自动步进扫频</SweepTitle>
                <SweepCell $bg="#a9a9a9"><OptionLabel><Check defaultChecked />频响曲线自动扫描</OptionLabel></SweepCell>
                <SweepCell $bg="#ffa500"><OptionLabel><Check />循环扫频</OptionLabel></SweepCell>
              </SweepHead>
              <SweepFields>
                <label htmlFor="f0">起始频率</label><SweepInput id="f0" defaultValue="0" />
                <label htmlFor="fs">步进量</label><SweepInput id="fs" defaultValue="100" />
                <label htmlFor="f1">最终频率</label><SweepInput id="f1" defaultValue="100000" $bg="#f6b840" />
                <label htmlFor="ft">时间间隔</label><SweepInput id="ft" defaultValue="500" />
              </SweepFields>
              <SweepActions>
                <SweepRun>
                  <SweepReading>67,200Hz ↑</SweepReading>
                  <FlatButton $width={104} $height={31}>暂停</FlatButton>
                  <FlatButton $width={98} $height={31}>结束</FlatButton>
                </SweepRun>
                <FlatButton $width={104} $height={58} $color="#a0a0a0">
                  <svg width="58" height="37" fill="none" stroke="#ccc">
                    <path d="M0 0h58v37H0z" fill="#5c5c5c" stroke="none" />
                    <path d="M0 5q4 5 8 3c6-3 8-7 12-7s6 4 12 7 10-7 14-7 8 5 12 5" /><path d={zig(21, 6, 38)} /><path d={zig(33, 4, 26)} />
                  </svg>
                  开始扫频
                </FlatButton>
              </SweepActions>
            </SweepPanel>
          </GeneratorSet>
        </Generator>
        <DiyRow><OptionLabel><Radio name="module" />IO DIY</OptionLabel></DiyRow>
        <ChipPicture><ChipDrawing /></ChipPicture>
        {[["IO1", 3], ["IO2", 4], ["IO3", 10]].map(([id, pin]) => (
          <IoCard key={id}>
            <IoId><span>{id}</span><strong>{pin}</strong><Connector /></IoId>
            <IoGrid>
              <IoCell $open><OptionLabel><Radio name={id} disabled />输入</OptionLabel></IoCell>
              <div />
              <IoCell><OptionLabel><Radio name={id} disabled defaultChecked />输出</OptionLabel></IoCell>
              <IoCell $joined $left={12} $gap={72}>
                <OptionLabel><Radio name={id + "l"} disabled />H</OptionLabel>
                <OptionLabel><Radio name={id + "l"} disabled defaultChecked />L</OptionLabel>
              </IoCell>
            </IoGrid>
          </IoCard>
        ))}
      </SidePage>
      <ModeStrip>
        <Mode $shift={42}><ModeWave index={0} /><span>Normal <ModeRadio name="mode" /></span></Mode>
        <Mode $shift={16}><ModeWave index={1} /><span>Peak-Detect <ModeRadio name="mode" defaultChecked /></span></Mode>
        <Mode><ModeWave index={2} /><span>High-Res <ModeRadio name="mode" /></span></Mode>
        <Interp>
          <OptionLabel $gap={9}><LedRadio name="interp" />Sine</OptionLabel>
          <OptionLabel $gap={9}><LedRadio name="interp" defaultChecked />Linear</OptionLabel>
        </Interp>
      </ModeStrip>
      <ToolRow>
        <FlatButton $width={52} $height={52} aria-label="Bars">
          <svg width="44" height="44"><path d="M9 22h6v18H9zM19 29h6v11h-6z" fill="#777" /><path d="M9 7h6v15H9zM29 31h6v9h-6z" fill="#3a3a3a" /><path d="M19 13h6v16h-6z" fill="#888" /><path d="M29 20h6v11h-6z" fill="#c8c8c8" />
            <path d="M4 43V2M1 6l3-4 3 4M0 41h42M38 38l4 3-4 3" fill="none" stroke="#222" strokeWidth="1.500" /></svg>
        </FlatButton>
        <FlatButton $width={52} $height={52} aria-label="Settings">
          <svg width="44" height="44" fill="none" stroke="#000"><circle cx="22" cy="22" r="19" strokeWidth="5" strokeDasharray="3 2.970" /><circle cx="22" cy="22" r="17" strokeWidth="2.500" />
            <path d="M12 16h20M12 22h20M12 28h20" strokeWidth="2" /><path d="M18 13v6M27 19v6M20 25v6" strokeWidth="2.500" /></svg>
        </FlatButton>
        <FlatButton $width={52} $height={52} $bg="#fff" aria-label="Curves"><AreaIcon size={44} /></FlatButton>
        <FlatButton $grow $height={52}>PWM | Pulse</FlatButton>
        <FlatButton $width={50} $height={52} $bg="#696969" $color="#7cfc00" $bold>FIR</FlatButton>
        <FlatButton $width={57} $height={52} $bg="#ffe4b5">Reset</FlatButton>
      </ToolRow>
      <LowerRow>
        <CaptureBox>
          <Select label="Channel" value="chA 平均值" $width={108} $bg="#e4e4e4" />
          <FlatButton $width={107} $height={47}>单次采集</FlatButton>
        </CaptureBox>
        <UpdateBox>
          <svg width="76" height="76" viewBox="0 0 76 76">
            <path d="M38 74l28-17q8-1-6 8-12 6-22 9z" fill="#bbb" opacity=".6" />
            <path d="M38 74c-2-8-5-12-8-14a31 31 0 1 1 16 0c-3 2-6 6-8 14z" fill="#d60a0a" /><circle cx="38" cy="31" r="25" fill="#f4f4f4" stroke="#999" />
            <text x="38" y="34" fontSize="16" fontWeight="bold" textAnchor="middle">NEW</text><text x="38" y="43" fontSize="9" fontWeight="bold" textAnchor="middle">UPDATE</text>
          </svg>
        </UpdateBox>
      </LowerRow>
      <DeviceBar>
        <RefreshSet>
          <legend>波形刷新率</legend>
          <RefreshSlider aria-label="波形刷新率" min="0" max="36" defaultValue="35" />
          <RefreshValue>35
            <svg width="56" height="27"><path d="M0 14h28V0l28 27H0v-5h48l-3-3H0z" fill="#fff" /></svg>
          </RefreshValue>
        </RefreshSet>
        <StopButton>Stop Device</StopButton>
      </DeviceBar>
    </RightPane>
  );
}

export default function App() {
  return (
    <>
      <GlobalStyle />
      <Desktop>
        <AppWindow>
          <TitleBar>
            <LogoIcon />
            <TitleText $wide>{"OSCH02  Version 22.07.28"}</TitleText>
            <WindowButtons restore />
          </TitleBar>
          <MenuBar>
            <MenuButton $width={94}><FileIcon />文件</MenuButton>
            <MenuButton $width={88}><StatsIcon />统计</MenuButton>
            <MenuButton $width={79}><FunnelIcon />直方图</MenuButton>
            <Select label="ID" value="ID: auto" arrow="solid" $width={72} $color="#777" />
            <CascadeBar>
              <CascadeCell $width={109}><OptionLabel $gap={5}><Check />示波器级联</OptionLabel></CascadeCell>
              <Select label="Channels" value="2 channels" disabled $width={114} $bg="#ccc" $border="#bbb" $color="#777" />
              <CascadeCell $width={135}><OptionLabel $gap={5} $color="#a0a0a0"><Check disabled defaultChecked />跟随主操控</OptionLabel></CascadeCell>
            </CascadeBar>
          </MenuBar>
          <Divider />
          <Main>
            <LeftPane>
              <TabStrip>
                <Tab $width={96} $active><SineTabIcon />示波器</Tab>
                <Tab $width={64}><GearIcon />高级</Tab>
                <Tab $width={51} $text>RS232</Tab>
                <Tab $width={78}><DotsIcon />多通道</Tab>
                <Tab $width={65}><GlobeIcon />LAN</Tab>
                <Tab $width={87}><CaptureIcon />单次采集</Tab>
                <Notice>
                  <svg width="17" height="17"><circle cx="8.500" cy="8.500" r="8" fill="#1d2338" /><path d="M6 5l5 3.500L6 12z" fill="#fff" /></svg>
                  <span>Oscilloscope: 21112 is available.</span>
                </Notice>
              </TabStrip>
              <ScopePage>
                <ScopeRow>
                  <div>
                    <ScopeHead>
                      <AxisName>chA:V</AxisName>
                      <StatusLine>
                        <Chip $bg="#708090" $after={62}>15500 Points</Chip>
                        <Chip>State: Live</Chip>
                        <StatusRight>
                          <Chip $bg="#0000ff" $pad={1} $after={4}>8.0 bit</Chip>采样率<Chip $bg="#f39a12">: 15M</Chip> S/s. | 缓冲区: 128K.
                        </StatusRight>
                      </StatusLine>
                    </ScopeHead>
                    <ScopePlot />
                  </div>
                  <ToolColumn>
                    <Grip />
                    {tools.map(([name, icon]) => <ToolButton key={name} aria-label={name} $bold={name === "F"}>{icon}</ToolButton>)}
                  </ToolColumn>
                </ScopeRow>
                <Measurements>
                  <thead><tr><td />{COLUMNS.map((c) => <th key={c} scope="col">{c}</th>)}</tr></thead>
                  <tbody>
                    {ROWS.map(([id, ...cells]) => (
                      <tr key={id}><th scope="row">{id}</th>{cells.map((c, i) => <td key={i}>{c}</td>)}</tr>
                    ))}
                  </tbody>
                </Measurements>
              </ScopePage>
            </LeftPane>
            <SidePanel />
          </Main>
          <Footer>
            <CouplingButton>DC</CouplingButton>
            <FooterRule />
            <CouplingButton>AC</CouplingButton>
            <AutoMeasure><OptionLabel><Check defaultChecked />Auto Measurement</OptionLabel></AutoMeasure>
          </Footer>
        </AppWindow>
        <CustomerCurves />
      </Desktop>
    </>
  );
}
